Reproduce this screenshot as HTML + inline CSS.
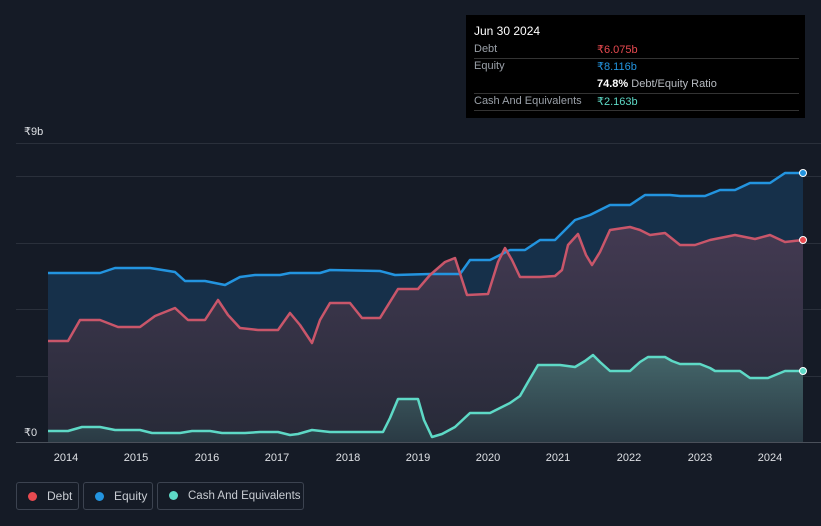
<!DOCTYPE html>
<html><head><meta charset="utf-8"><style>
html,body{margin:0;background:#151b26;width:821px;height:526px;overflow:hidden}
body{font-family:"Liberation Sans",sans-serif;position:relative}
.tt{position:absolute;left:466px;top:15px;width:339px;height:103px;background:#000;color:#fff;font-size:11px}
.tt .r{position:absolute;left:8px;right:6px;border-bottom:1px solid #333;height:17px}
.lab{color:#9aa0a8;position:absolute;left:0;top:2px;white-space:nowrap}
.val{position:absolute;left:123px;top:2px;font-weight:bold;white-space:nowrap}
.leg{position:absolute;top:482px;height:28px;border:1px solid #3c4350;border-radius:3px;color:#c8ccd2;font-size:12px;line-height:26px;box-sizing:border-box;white-space:nowrap;overflow:hidden}
.dot{display:inline-block;width:9px;height:9px;border-radius:50%;margin:0 10px 0 11px;vertical-align:-1px}
</style></head><body>
<svg width="821" height="526" style="position:absolute;left:0;top:0">
<defs>
<linearGradient id="gd" x1="0" y1="0" x2="0" y2="1"><stop offset="0" stop-color="#433a52"/><stop offset="1" stop-color="#272a38"/></linearGradient>
<linearGradient id="gc" x1="0" y1="0" x2="0" y2="1"><stop offset="0" stop-color="#44666a"/><stop offset="1" stop-color="#2a3a44"/></linearGradient>
</defs>
<g stroke="#2a303b" stroke-width="1">
<line x1="16" y1="143.5" x2="821" y2="143.5"/><line x1="16" y1="176.5" x2="821" y2="176.5"/><line x1="16" y1="243.5" x2="821" y2="243.5"/><line x1="16" y1="309.5" x2="821" y2="309.5"/><line x1="16" y1="376.5" x2="821" y2="376.5"/>
</g>
<polygon fill="#16304a" points="48,273 100,273 115,268 150,268 175,272 185,281 205,281 215,283 225,285 240,277 255,275 280,275 290,273 320,273 330,270 380,271 395,275 430,274 460,274 470,260 490,260 500,255 510,250 525,250 540,240 555,240 565,230 575,220 590,215 610,205 630,205 645,195 670,195 680,196 705,196 720,190 735,190 750,183 770,183 785,173 803,173 803,442 48,442"/>
<polygon fill="url(#gd)" points="48,341 68,341 80,320 100,320 118,327 140,327 155,316 175,308 188,320 205,320 218,300 228,315 240,328 258,330 278,330 290,313 300,325 312,343 320,320 330,303 350,303 362,318 380,318 398,289 418,289 430,275 445,262 455,258 467,295 488,294 498,262 505,248 512,260 520,277 540,277 555,276 562,270 568,245 578,234 586,255 592,265 600,252 610,230 630,227 640,230 650,235 665,233 680,245 695,245 710,240 735,235 755,239 770,235 785,242 803,240 803,442 48,442"/>
<polygon fill="url(#gc)" points="48,431 68,431 82,427 100,427 115,430 140,430 152,433 180,433 192,431 210,431 222,433 245,433 260,432 278,432 290,435 298,434 312,430 330,432 350,432 383,432 390,418 398,399 418,399 424,420 432,437 442,434 455,427 470,413 490,413 500,408 510,403 520,396 528,382 538,365 560,365 575,367 585,361 593,355 600,362 610,371 630,371 640,362 648,357 665,357 672,361 680,364 700,364 710,368 715,371 740,371 750,378 768,378 785,371 803,371 803,442 48,442"/>
<g fill="none" stroke-width="2.5" stroke-linejoin="round">
<polyline stroke="#2394df" points="48,273 100,273 115,268 150,268 175,272 185,281 205,281 215,283 225,285 240,277 255,275 280,275 290,273 320,273 330,270 380,271 395,275 430,274 460,274 470,260 490,260 500,255 510,250 525,250 540,240 555,240 565,230 575,220 590,215 610,205 630,205 645,195 670,195 680,196 705,196 720,190 735,190 750,183 770,183 785,173 803,173"/>
<polyline stroke="#c9566a" points="48,341 68,341 80,320 100,320 118,327 140,327 155,316 175,308 188,320 205,320 218,300 228,315 240,328 258,330 278,330 290,313 300,325 312,343 320,320 330,303 350,303 362,318 380,318 398,289 418,289 430,275 445,262 455,258 467,295 488,294 498,262 505,248 512,260 520,277 540,277 555,276 562,270 568,245 578,234 586,255 592,265 600,252 610,230 630,227 640,230 650,235 665,233 680,245 695,245 710,240 735,235 755,239 770,235 785,242 803,240"/>
<polyline stroke="#5ed9c6" points="48,431 68,431 82,427 100,427 115,430 140,430 152,433 180,433 192,431 210,431 222,433 245,433 260,432 278,432 290,435 298,434 312,430 330,432 350,432 383,432 390,418 398,399 418,399 424,420 432,437 442,434 455,427 470,413 490,413 500,408 510,403 520,396 528,382 538,365 560,365 575,367 585,361 593,355 600,362 610,371 630,371 640,362 648,357 665,357 672,361 680,364 700,364 710,368 715,371 740,371 750,378 768,378 785,371 803,371"/>
</g>
<circle cx="803" cy="173" r="3.5" fill="#2394df" stroke="#fff" stroke-width="1"/>
<circle cx="803" cy="240" r="3.5" fill="#e84a50" stroke="#fff" stroke-width="1"/>
<circle cx="803" cy="371" r="3.5" fill="#5ed9c6" stroke="#fff" stroke-width="1"/>
<rect x="16" y="424" width="32" height="18" fill="#151b26"/>
<line x1="16" y1="442.5" x2="821" y2="442.5" stroke="#4a505a"/>
<g font-size="11" fill="#dde0e4" font-family="Liberation Sans">
<text x="24" y="135">₹9b</text><text x="24" y="436">₹0</text>
</g>
<g font-size="11" fill="#dde0e4" text-anchor="middle" font-family="Liberation Sans">
<text x="66" y="461">2014</text><text x="136" y="461">2015</text><text x="207" y="461">2016</text><text x="277" y="461">2017</text><text x="348" y="461">2018</text><text x="418" y="461">2019</text><text x="488" y="461">2020</text><text x="558" y="461">2021</text><text x="629" y="461">2022</text><text x="700" y="461">2023</text><text x="770" y="461">2024</text>
</g>
</svg>
<div class="tt">
<div style="position:absolute;left:8px;top:9px;font-size:12px">Jun 30 2024</div>
<div class="r" style="top:26px"><span class="lab">Debt</span><span class="val" style="color:#e84a50;font-weight:normal">₹6.075b</span></div>
<div class="r" style="top:43px;border:none"><span class="lab">Equity</span><span class="val" style="color:#2394df;font-weight:normal">₹8.116b</span></div>
<div class="r" style="top:61px"><span class="val"><b>74.8%</b> <span style="color:#b8bcc2;font-weight:normal">Debt/Equity Ratio</span></span></div>
<div class="r" style="top:78px"><span class="lab">Cash And Equivalents</span><span class="val" style="color:#5ed9c6;font-weight:normal">₹2.163b</span></div>
</div>
<div class="leg" style="left:16px;width:63px"><span class="dot" style="background:#e84a50"></span>Debt</div>
<div class="leg" style="left:83px;width:70px"><span class="dot" style="background:#2394df"></span>Equity</div>
<div class="leg" style="left:157px;width:147px;font-size:11.5px"><span class="dot" style="background:#5ed9c6"></span>Cash And Equivalents</div>
</body></html>
